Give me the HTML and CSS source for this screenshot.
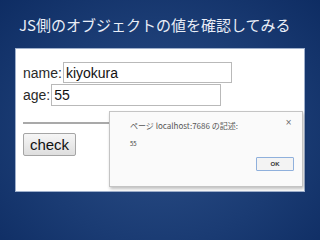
FILE: index.html
```html
<!DOCTYPE html>
<html lang="ja">
<head>
    <meta charset="UTF-8">
    <title>JS側のオブジェクトの値を確認してみる</title>
    <link rel="stylesheet" href="styles.css">
</head>
<body>
  <h1 class="slide-title">JS側のオブジェクトの値を確認してみる</h1>
  <div class="shot">
    <div class="row">
      <label class="label">name:</label>
      <input class="field name-field" type="text" value="kiyokura">
    </div>
    <div class="row">
      <label class="label">age:</label>
      <input class="field age-field" type="text" value="55">
    </div>
    <div class="rule"></div>
    <button class="check">check</button>

    <div class="dialog">
      <div class="dialog-head">
        <span class="dialog-title">ページ localhost:7686 の記述:</span>
        <span class="dialog-close">×</span>
      </div>
      <div class="dialog-msg">55</div>
      <div class="dialog-foot">
        <button class="ok">OK</button>
      </div>
    </div>
  </div>
</body>
</html>
```

FILE: styles.css
```css
html, body {
    margin: 0;
    width: 320px;
    height: 240px;
    overflow: hidden;
}
body {
    font-family: "Liberation Sans", Arial, sans-serif;
    background: radial-gradient(ellipse 75% 85% at 50% 55%, #2b4e87 0%, #1a3b73 55%, #0c2a60 100%);
}
.slide-title {
    margin: 0;
    height: 49px;
    padding-left: 19px;
    display: flex;
    align-items: center;
    font-family: "Noto Sans CJK JP", sans-serif;
    font-size: 15px;
    font-weight: normal;
    color: #e9eef7;
}
.shot {
    position: relative;
    margin: 0 16px;
    height: 142px;
    background-color: #fff;
    box-sizing: border-box;
    padding: 13px 7px 0 7px;
    box-shadow: 0 0 0 1px #9fb0cc;
}
.row {
    display: flex;
    align-items: center;
    margin-bottom: 1px;
}
.label {
    font-size: 14px;
    color: #2a2a2a;
    margin-right: 1px;
}
.field {
    box-sizing: border-box;
    height: 21px;
    margin: 0;
    padding: 0 2px;
    border: 1px solid #b9b9b9;
    font-family: "Liberation Sans", Arial, sans-serif;
    font-size: 14px;
    color: #111;
    outline: none;
}
.name-field {
    width: 169px;
}
.age-field {
    width: 170px;
    height: 22px;
}
.rule {
    margin-top: 16px;
    height: 2px;
    background-color: #a9a9a9;
}
.check {
    margin-top: 9px;
    width: 53px;
    height: 23px;
    padding: 0;
    font-family: "Liberation Sans", Arial, sans-serif;
    font-size: 15px;
    color: #111;
    background: linear-gradient(#f6f6f6, #dedede);
    border: 1px solid #a5a5a5;
    border-radius: 2px;
}
.dialog {
    position: absolute;
    left: 93px;
    top: 62px;
    width: 194px;
    height: 76px;
    box-sizing: border-box;
    background-color: #fafafa;
    border: 1px solid #c4c4c4;
    box-shadow: 1px 2px 3px rgba(0, 0, 0, 0.25);
    padding: 6px 8px 0 20px;
    font-family: "Noto Sans CJK JP", sans-serif;
    color: #555;
}
.dialog-head {
    display: flex;
    justify-content: space-between;
    align-items: flex-start;
}
.dialog-title {
    font-size: 8px;
    margin-top: 2px;
}
.dialog-close {
    font-family: "DejaVu Sans", sans-serif;
    font-size: 8px;
    color: #666;
    margin-right: 2px;
}
.dialog-msg {
    margin-top: 8px;
    font-size: 6px;
    color: #444;
}
.dialog-foot {
    display: flex;
    justify-content: flex-end;
    margin-top: 9px;
}
.ok {
    width: 38px;
    height: 14px;
    padding: 0;
    font-family: "Liberation Sans", Arial, sans-serif;
    font-size: 6px;
    font-weight: bold;
    color: #333;
    background: #f3f3f3;
    border: 1px solid #8fb0dc;
    border-radius: 1px;
}
```
